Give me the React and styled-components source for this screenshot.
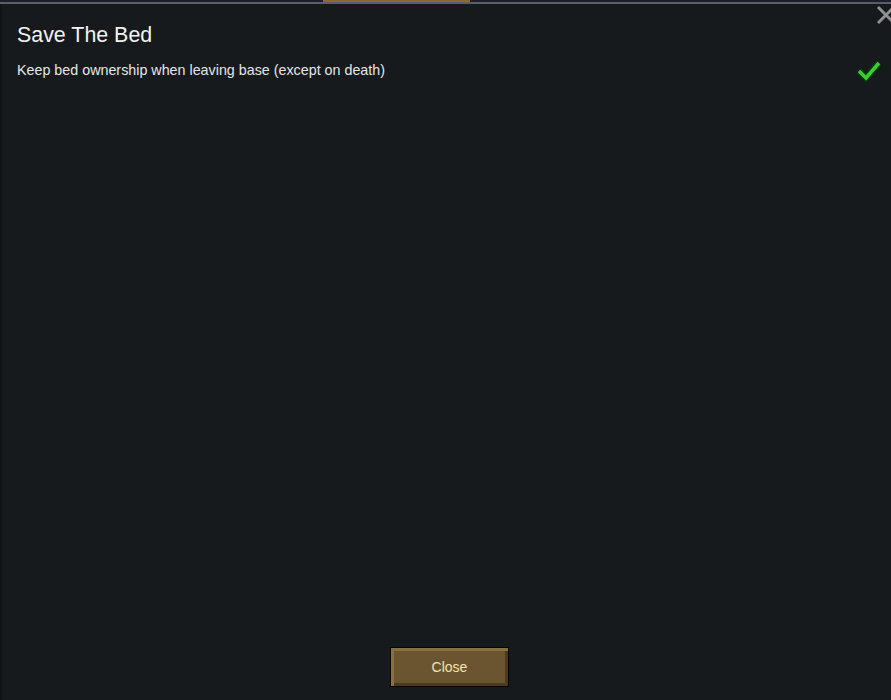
import React from 'react';
import styled, { createGlobalStyle } from 'styled-components';

const GlobalStyle = createGlobalStyle`
  html, body {
    margin: 0;
    padding: 0;
    background: #171a1d;
    overflow: hidden;
  }
  body {
    font-family: 'Liberation Sans', Arial, sans-serif;
  }
`;

const Window = styled.div`
  width: 891px;
  height: 700px;
  display: flex;
  flex-direction: column;
  background: #171a1d;
  overflow: hidden;
`;

const TabStrip = styled.div`
  height: 2px;
  display: flex;
  padding-left: 323px;
  background: #1d2029;
  border-bottom: 2px solid #5c5d6c;
`;

const ActiveTab = styled.div`
  width: 147px;
  background: #8c6a2c;
`;

const Panel = styled.div`
  position: relative;
  flex: 1;
  display: flex;
  flex-direction: column;
  padding: 18px 9px 13px 15px;
  border-left: 2px solid #101214;
  background: #171a1d;
  color: #ececec;
`;

const Title = styled.h2`
  margin: 0;
  font-size: 21.4px;
  font-weight: 400;
  line-height: 26px;
  color: #f2f2f2;
`;

const OptionRow = styled.div`
  display: flex;
  align-items: center;
  justify-content: space-between;
  margin-top: 10px;
`;

const OptionLabel = styled.span`
  font-size: 14.3px;
  line-height: 17px;
  color: #e6e6e6;
`;

const Spacer = styled.div`
  flex: 1;
`;

const Footer = styled.div`
  display: flex;
  justify-content: center;
`;

const CloseButton = styled.button`
  width: 119px;
  height: 40px;
  padding: 0;
  border: 1px solid #050505;
  box-shadow:
    inset 3px 3px 0 #85703f,
    inset -3px -3px 0 #4b3b1c;
  background: #6b5530;
  color: #f3e3b6;
  font-family: 'Liberation Sans', Arial, sans-serif;
  font-size: 14px;
  cursor: pointer;
`;

const CornerClose = styled.button`
  position: absolute;
  top: 0;
  right: -6px;
  width: 22px;
  height: 22px;
  padding: 0;
  border: none;
  background: transparent;
  cursor: pointer;
`;

const CheckIcon = () => (
  <svg width="26" height="24" viewBox="0 0 26 24">
    <polyline
      points="3,13 10,20 23,5"
      fill="none"
      stroke="#0c3a0c"
      strokeWidth="6.5"
      strokeLinejoin="miter"
    />
    <polyline
      points="3,13 10,20 23,5"
      fill="none"
      stroke="#36d12d"
      strokeWidth="3.5"
      strokeLinejoin="miter"
    />
  </svg>
);

const XIcon = () => (
  <svg width="22" height="22" viewBox="0 0 22 22">
    <path d="M3 3 L19 19 M19 3 L3 19" stroke="#8f9193" strokeWidth="3" />
  </svg>
);

const App = () => (
  <>
    <GlobalStyle />
    <Window>
      <TabStrip>
        <ActiveTab />
      </TabStrip>
      <Panel>
        <CornerClose aria-label="close">
          <XIcon />
        </CornerClose>
        <Title>Save The Bed</Title>
        <OptionRow>
          <OptionLabel>Keep bed ownership when leaving base (except on death)</OptionLabel>
          <CheckIcon />
        </OptionRow>
        <Spacer />
        <Footer>
          <CloseButton>Close</CloseButton>
        </Footer>
      </Panel>
    </Window>
  </>
);

export default App;
